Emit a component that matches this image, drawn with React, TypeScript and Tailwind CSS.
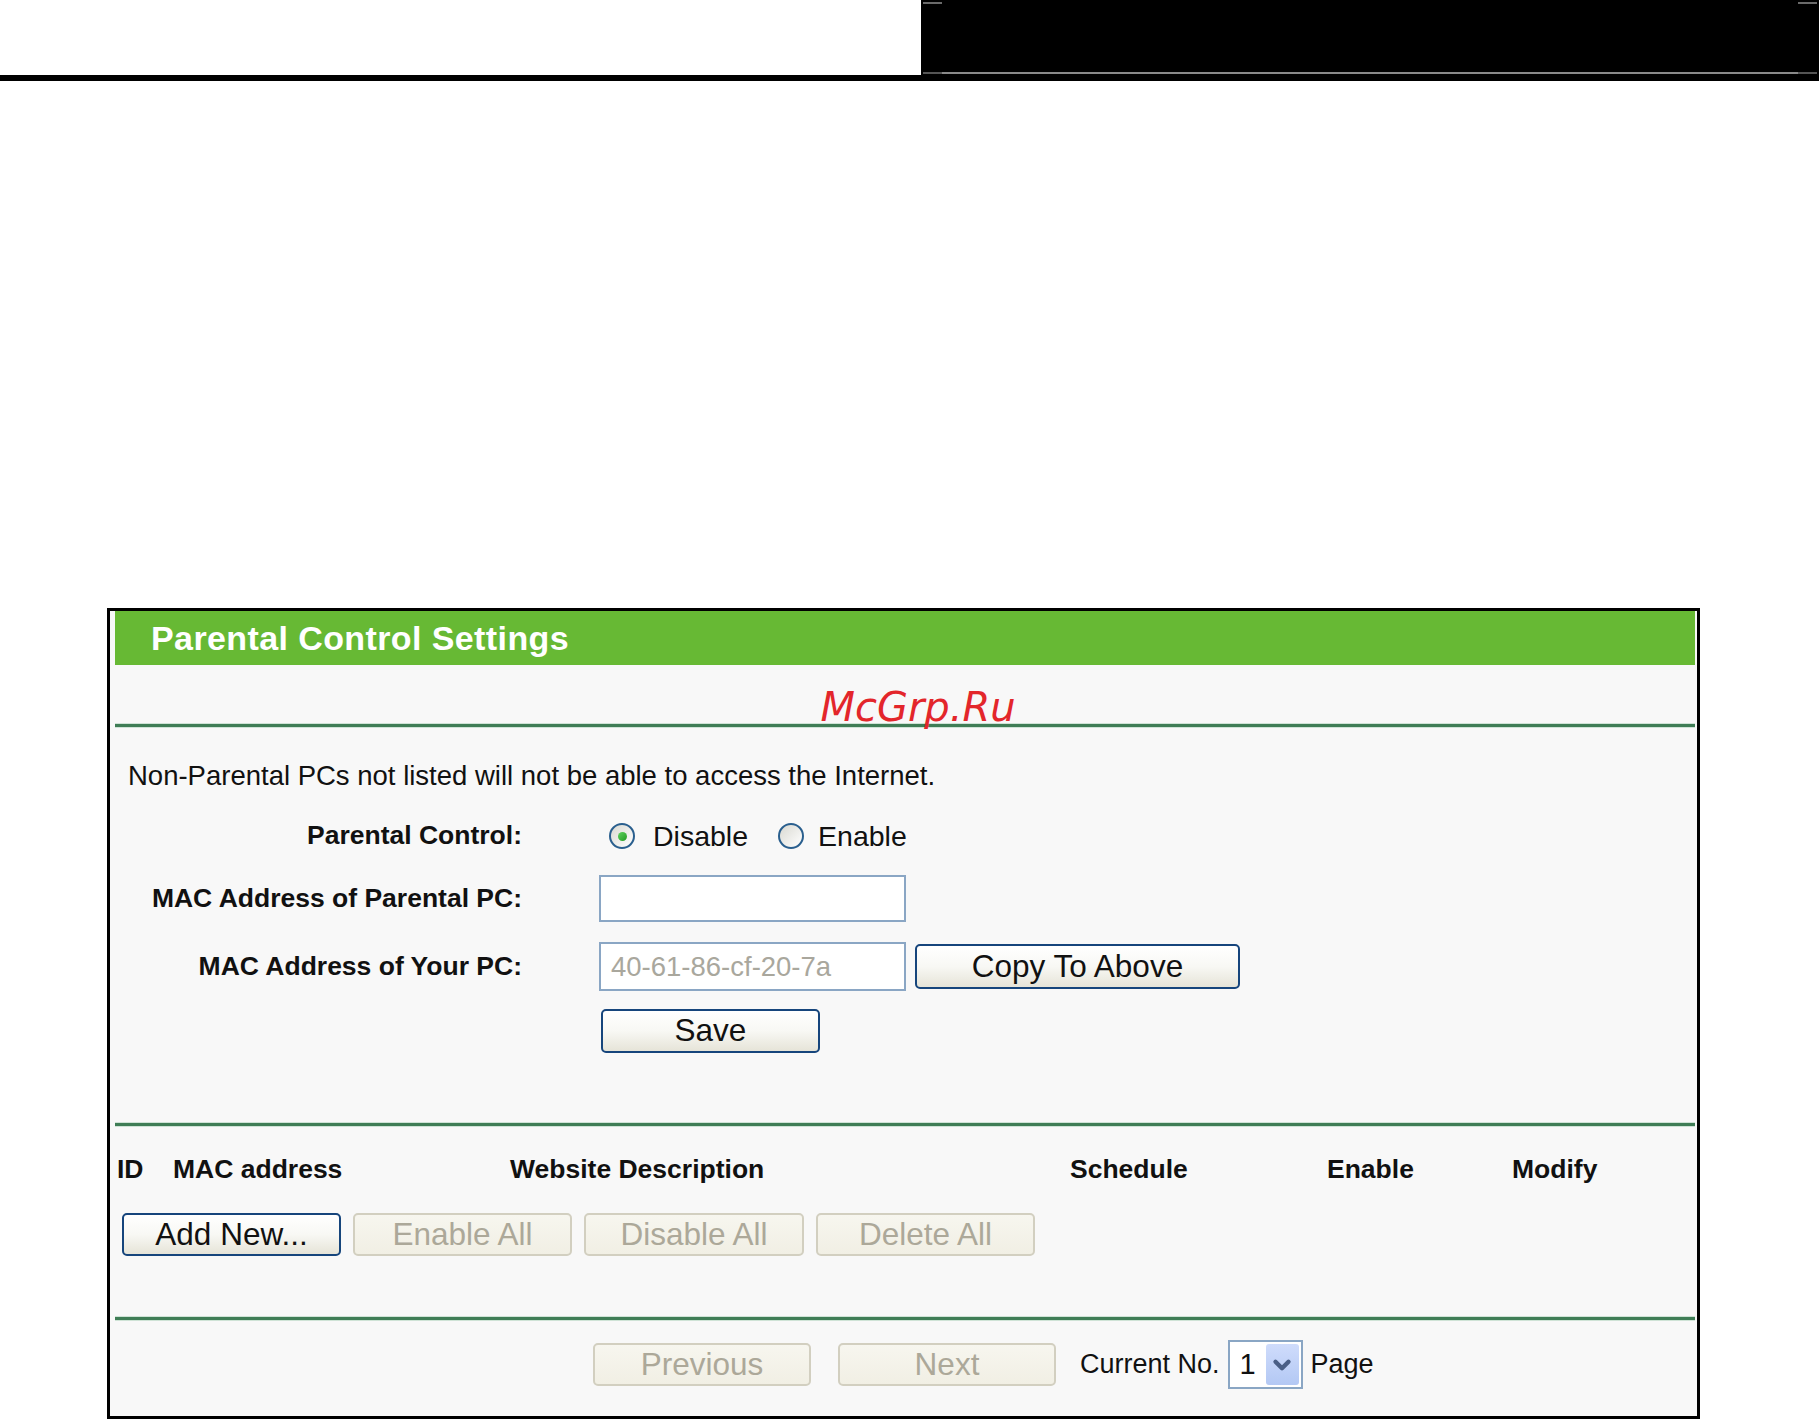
import { ChevronDown } from 'lucide-react'

const font = { fontFamily: '"Liberation Sans", Arial, sans-serif' }

function XpButton({ label, width, height, disabled }: { label: string; width: string; height: string; disabled?: boolean }) {
  if (disabled) {
    return (
      <div
        className={`${width} ${height} flex items-center justify-center rounded-[5px] border-2 border-[#d2cfc0] bg-gradient-to-b from-[#f7f6ef] to-[#f1efe4] text-[31.5px] text-[#aca899]`}
      >
        {label}
      </div>
    )
  }
  return (
    <div
      className={`${width} ${height} flex items-center justify-center rounded-[5px] border-2 border-[#16457c] bg-gradient-to-b from-white via-[#f8f8f4] to-[#e6e4d8] text-[31.5px] text-[#111]`}
    >
      {label}
    </div>
  )
}

function Radio({ checked }: { checked?: boolean }) {
  return (
    <div className="w-[26px] h-[26px] rounded-full border-2 border-[#2a5f8e] bg-gradient-to-br from-[#d9d9d2] to-white flex items-center justify-center">
      {checked && <div className="w-[9px] h-[9px] rounded-full bg-gradient-to-br from-[#5ed35e] to-[#1f9a1f]" />}
    </div>
  )
}

function Divider() {
  return <div className="h-[3px] bg-[#3f7d56] shadow-[0_1px_0_#cfe3d6,0_-1px_0_#cfe3d6]" />
}

export default function App() {
  return (
    <div className="w-[1819px] h-[1419px] bg-white overflow-hidden" style={font}>
      {/* top strip */}
      <div className="flex h-[75px]">
        <div className="w-[921px] bg-white" />
        <div className="flex-1 bg-black flex flex-col justify-between px-[2px] pt-[2px] pb-[1px]">
          <div className="flex justify-between">
            <div className="w-[19px] h-[2px] bg-[#6a6a6a]" />
            <div className="w-[19px] h-[2px] bg-[#6a6a6a]" />
          </div>
          <div className="flex h-[2px]">
            <div className="w-[19px] bg-[#555]" />
            <div className="flex-1 bg-[#8a8a8a]" />
            <div className="w-[19px] bg-[#555]" />
          </div>
        </div>
      </div>
      <div className="h-[6px] bg-black" />

      {/* panel */}
      <div className="relative mt-[527px] ml-[107px] w-[1593px] h-[811px] border-[3px] border-black bg-[#f8f8f8] pl-[5px] pr-[2px]">
        <div className="h-[54px] bg-[#67b934] flex items-center pl-[36px]">
          <span className="text-white font-bold text-[34px] tracking-[0.4px]">Parental Control Settings</span>
        </div>
        <div className="h-[59px] flex items-end justify-center pl-[26px]">
          <span
            className="italic text-[40px] leading-[46px] text-[#e3262b] mb-[-6px]"
            style={{ fontFamily: '"DejaVu Sans", sans-serif' }}
          >
            McGrp.Ru
          </span>
        </div>
        <Divider />

        <div className="pt-[33px] pl-[13px] text-[27.5px] leading-[32px] text-[#111]">
          Non-Parental PCs not listed will not be able to access the Internet.
        </div>

        <div className="mt-[23px] h-[42px] flex items-center">
          <div className="w-[407px] text-right font-bold text-[26.5px] text-[#111]">Parental Control:</div>
          <div className="ml-[87px] flex items-center text-[28.5px] text-[#111]">
            <Radio checked />
            <span className="ml-[18px]">Disable</span>
            <div className="ml-[30px]">
              <Radio />
            </div>
            <span className="ml-[14px]">Enable</span>
          </div>
        </div>

        <div className="mt-[18px] h-[47px] flex items-center">
          <div className="w-[407px] text-right font-bold text-[26.5px] text-[#111]">MAC Address of Parental PC:</div>
          <div className="ml-[77px] w-[307px] h-[47px] border-2 border-[#8aa6c4] bg-white" />
        </div>

        <div className="mt-[20px] h-[49px] flex items-center">
          <div className="w-[407px] text-right font-bold text-[26.5px] text-[#111]">MAC Address of Your PC:</div>
          <div className="ml-[77px] w-[307px] h-[49px] border-2 border-[#8aa6c4] bg-white flex items-center pl-[10px] text-[27.5px] text-[#a9a79d]">
            40-61-86-cf-20-7a
          </div>
          <div className="ml-[9px]">
            <XpButton label="Copy To Above" width="w-[325px]" height="h-[45px]" />
          </div>
        </div>

        <div className="mt-[18px] h-[44px] flex items-center pl-[486px]">
          <XpButton label="Save" width="w-[219px]" height="h-[44px]" />
        </div>

        <div className="mt-[70px]">
          <Divider />
        </div>

        <div className="mt-[24px] h-[40px] flex items-center pl-[2px] font-bold text-[26.5px] text-[#111]">
          <div className="w-[56px]">ID</div>
          <div className="w-[337px]">MAC address</div>
          <div className="w-[560px]">Website Description</div>
          <div className="w-[257px]">Schedule</div>
          <div className="w-[185px]">Enable</div>
          <div>Modify</div>
        </div>

        <div className="mt-[23px] h-[43px] flex items-center gap-[12px] pl-[7px]">
          <XpButton label="Add New..." width="w-[219px]" height="h-[43px]" />
          <XpButton label="Enable All" width="w-[219px]" height="h-[43px]" disabled />
          <XpButton label="Disable All" width="w-[220px]" height="h-[43px]" disabled />
          <XpButton label="Delete All" width="w-[219px]" height="h-[43px]" disabled />
        </div>

        <div className="mt-[61px]">
          <Divider />
        </div>

        <div className="mt-[20px] h-[49px] flex items-center pl-[478px] text-[27px] text-[#111]">
          <XpButton label="Previous" width="w-[218px]" height="h-[43px]" disabled />
          <div className="ml-[27px]">
            <XpButton label="Next" width="w-[218px]" height="h-[43px]" disabled />
          </div>
          <span className="ml-[24px]">Current No.</span>
          <div className="ml-[8px] w-[75px] h-[49px] border-2 border-[#8aa6c4] bg-white flex items-center pl-[10px] pr-[2px] py-[2px]">
            <span className="flex-1 text-[29px]">1</span>
            <div className="w-[33px] h-full rounded-[3px] bg-gradient-to-b from-[#cfdcfb] to-[#b3c8f4] flex items-center justify-center">
              <ChevronDown size={26} strokeWidth={4} className="text-[#4a5f86]" />
            </div>
          </div>
          <span className="ml-[8px]">Page</span>
        </div>
      </div>
    </div>
  )
}
